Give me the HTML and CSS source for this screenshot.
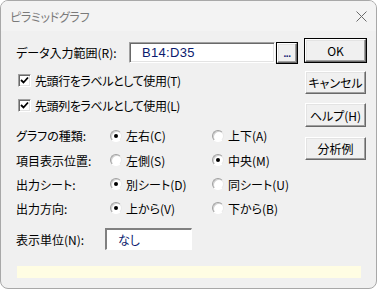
FILE: index.html
```html
<!DOCTYPE html>
<html lang="ja">
<head>
<meta charset="utf-8">
<title>ピラミッドグラフ</title>
<link rel="stylesheet" href="styles.css">
</head>
<body>
<div class="window">
  <div class="titlebar">
    <span class="title">ピラミッドグラフ</span>
    <svg class="close" width="11" height="11" viewBox="0 0 11 11"><path d="M0.5 0.5L10.5 10.5M10.5 0.5L0.5 10.5" stroke="#6a6a6a" stroke-width="1" fill="none"/></svg>
  </div>
  <div class="client">
    <div class="main">
      <div class="left">
        <div class="row row-range">
          <span class="lbl lbl-range">データ入力範囲(R):</span>
          <div class="field field-range">B14:D35</div>
          <div class="btn btn-default btn-browse"><span class="dots">...</span></div>
        </div>
        <div class="check check-first">
          <span class="box"><svg width="9" height="9" viewBox="0 0 9 9"><path d="M1 4L3.5 6.5L8 1.5" stroke="#000" stroke-width="1.8" fill="none"/></svg></span>
          <span class="ctext">先頭行をラベルとして使用(T)</span>
        </div>
        <div class="check">
          <span class="box"><svg width="9" height="9" viewBox="0 0 9 9"><path d="M1 4L3.5 6.5L8 1.5" stroke="#000" stroke-width="1.8" fill="none"/></svg></span>
          <span class="ctext">先頭列をラベルとして使用(L)</span>
        </div>
        <div class="opts">
          <span class="olbl">グラフの種類:</span>
          <span class="radio on"><i class="dot"></i>左右(C)</span>
          <span class="radio"><i class="dot"></i>上下(A)</span>
          <span class="olbl">項目表示位置:</span>
          <span class="radio"><i class="dot"></i>左側(S)</span>
          <span class="radio on"><i class="dot"></i>中央(M)</span>
          <span class="olbl">出力シート:</span>
          <span class="radio on"><i class="dot"></i>別シート(D)</span>
          <span class="radio"><i class="dot"></i>同シート(U)</span>
          <span class="olbl">出力方向:</span>
          <span class="radio on"><i class="dot"></i>上から(V)</span>
          <span class="radio"><i class="dot"></i>下から(B)</span>
        </div>
        <div class="row row-unit">
          <span class="lbl lbl-unit">表示単位(N):</span>
          <div class="field field-unit">なし</div>
        </div>
      </div>
      <div class="right">
        <div class="btn btn-default btn-cmd">OK</div>
        <div class="btn btn-cmd">キャンセル</div>
        <div class="btn btn-cmd">ヘルプ(H)</div>
        <div class="btn btn-cmd">分析例</div>
      </div>
    </div>
    <div class="status"></div>
  </div>
</div>
</body>
</html>
```

FILE: styles.css
```css
html, body {
  margin: 0;
  padding: 0;
  background: #ffffff;
}

body {
  font-family: "Noto Sans CJK JP", "Noto Sans", sans-serif;
  font-size: 12px;
  font-feature-settings: "palt";
  color: #000;
}

.window {
  width: 377px;
  height: 289px;
  box-sizing: border-box;
  border: 1px solid #a8a8a8;
  border-radius: 8px;
  background: #f0f0f0;
  overflow: hidden;
  display: flex;
  flex-direction: column;
}

.titlebar {
  height: 30px;
  flex: none;
  background: #f3f3f3;
  display: flex;
  align-items: center;
  justify-content: space-between;
  padding: 1px 9px 0 9px;
  box-sizing: border-box;
}

.title {
  color: #7a7a7a;
  font-size: 12px;
  letter-spacing: -0.3px;
}

.close {
  display: block;
}

.client {
  flex: 1;
  padding: 0 10px 0 15px;
}

.main {
  display: flex;
  gap: 8px;
}

.left {
  width: 281px;
  padding-top: 11px;
}

.row {
  display: flex;
  align-items: center;
}

.row-range {
  height: 21px;
}

.lbl-range {
  width: 113px;
  flex: none;
}

.field {
  box-sizing: border-box;
  background: #fff;
  border-top: 1px solid #a0a0a0;
  border-left: 1px solid #a0a0a0;
  border-right: 1px solid #ffffff;
  border-bottom: 1px solid #ffffff;
  box-shadow: inset 1px 1px 0 #696969, inset -1px -1px 0 #e3e3e3;
  display: flex;
  align-items: center;
}

.field-range {
  width: 146px;
  height: 21px;
  padding-left: 12px;
  font-family: "Liberation Sans", sans-serif;
  font-size: 13px;
  letter-spacing: 0.3px;
  color: #0a1a6e;
}

.btn {
  box-sizing: border-box;
  background: #f0f0f0;
  border-top: 1px solid #ffffff;
  border-left: 1px solid #ffffff;
  border-right: 1px solid #696969;
  border-bottom: 1px solid #696969;
  box-shadow: inset -1px -1px 0 #a0a0a0, inset 1px 1px 0 #e3e3e3;
  display: flex;
  align-items: center;
  justify-content: center;
}

.btn-default {
  outline: 1px solid #000;
  outline-offset: 0;
  border-color: #ffffff #696969 #696969 #ffffff;
}

.btn-browse {
  width: 20px;
  height: 20px;
  margin-left: 2px;
  align-items: flex-end;
}

.dots {
  font-family: "Liberation Sans", sans-serif;
  font-weight: bold;
  font-size: 10px;
  line-height: 10px;
  color: #102070;
  padding-bottom: 3px;
  letter-spacing: -0.5px;
}

.check {
  display: flex;
  align-items: center;
  height: 20px;
  margin-top: 7px;
}

.check + .check {
  margin-top: 5px;
}

.ctext {
  letter-spacing: -0.4px;
}

.box {
  width: 13px;
  height: 13px;
  box-sizing: border-box;
  margin-left: 2px;
  margin-right: 4px;
  background: #fff;
  border-top: 1px solid #a0a0a0;
  border-left: 1px solid #a0a0a0;
  border-right: 1px solid #fff;
  border-bottom: 1px solid #fff;
  box-shadow: inset 1px 1px 0 #696969, inset -1px -1px 0 #e3e3e3;
  display: flex;
  align-items: center;
  justify-content: center;
}

.box svg {
  display: block;
}

.opts {
  margin-top: 8px;
  display: grid;
  grid-template-columns: 94px 102px 1fr;
  grid-template-rows: 25px 24px 24px 24px;
  align-items: center;
}

.radio {
  display: flex;
  align-items: center;
}

.dot {
  width: 12px;
  height: 12px;
  box-sizing: border-box;
  border-radius: 50%;
  margin-right: 4px;
  background: #fff;
  border: 1px solid;
  border-color: #a0a0a0 #e8e8e8 #ffffff #a0a0a0;
  box-shadow: inset 1px 1px 0 #d0d0d0;
  position: relative;
}

.radio.on .dot::after {
  content: "";
  position: absolute;
  left: 3px;
  top: 3px;
  width: 4px;
  height: 4px;
  border-radius: 50%;
  background: #000;
}

.row-unit {
  margin-top: 8px;
  height: 22px;
}

.lbl-unit {
  width: 89px;
  flex: none;
}

.field-unit {
  width: 87px;
  height: 22px;
  padding-left: 11px;
  border-top: 2px solid #808080;
  border-left: 2px solid #808080;
  box-shadow: none;
  border-right: 1px solid #ffffff;
  border-bottom: 1px solid #ffffff;
  color: #0a1a6e;
}

.right {
  width: 61px;
  padding-top: 8px;
  display: flex;
  flex-direction: column;
  gap: 9px;
}

.btn-cmd {
  height: 23px;
  font-size: 12px;
}

.btn-cmd:nth-child(3) {
  height: 24px;
}

.btn-cmd:nth-child(4) {
  margin-top: 1px;
}

.status {
  margin-top: 16px;
  margin-left: 1px;
  width: 344px;
  height: 12px;
  background: #fffde3;
}
```
